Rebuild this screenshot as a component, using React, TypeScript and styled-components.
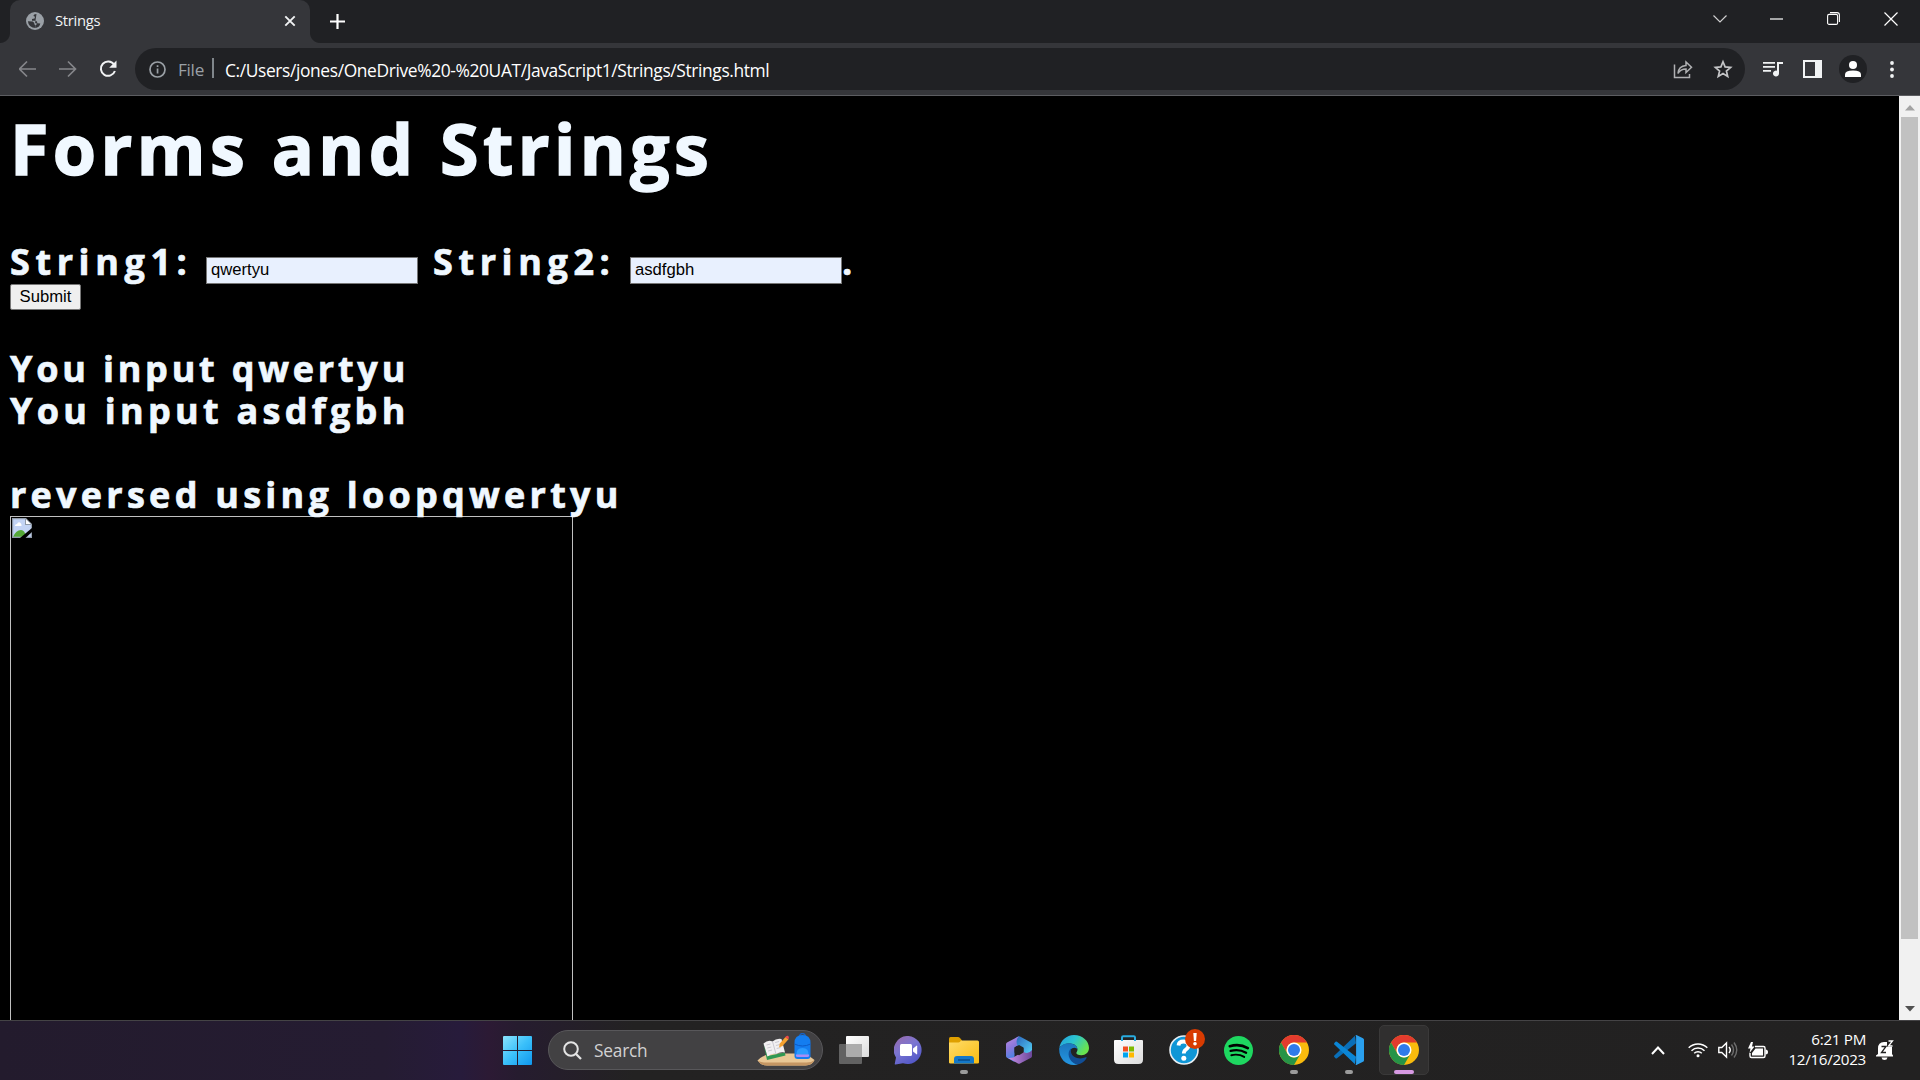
import React from 'react';
import styled, { createGlobalStyle } from 'styled-components';

const ui = '"Open Sans", "Noto Sans", sans-serif';

const Global = createGlobalStyle`
  * { box-sizing: border-box; }
  body { margin: 0; background: #000; overflow: hidden; }
`;
const Screen = styled.div`
  width: 1920px; height: 1080px; display: flex; flex-direction: column;
  background: #000; overflow: hidden; font-family: ${ui}; color: #fff;
  svg { display: block; flex: none; }
`;

/* ---------- browser chrome ---------- */
const TabStrip = styled.header`
  height: 43px; flex: none; display: flex; background: #202124;
`;
const Tab = styled.div`
  width: 300px; margin-left: 10px; height: 43px; position: relative;
  border-radius: 10px 10px 0 0; background: #35363a;
  display: flex; align-items: center; padding: 0 14px 2px 16px;
  &::before, &::after {
    content: ''; position: absolute; bottom: 0; width: 10px; height: 10px;
  }
  &::before { left: -10px; background: radial-gradient(circle at 0 0, #202124 9.5px, #35363a 10.5px); }
  &::after { right: -10px; background: radial-gradient(circle at 100% 0, #202124 9.5px, #35363a 10.5px); }
`;
const TabTitle = styled.span`
  flex: 1; margin: -1px 0 0 11px; font-size: 14.8px; letter-spacing: -0.3px; line-height: 20px; color: #f1f3f4;
`;
const NewTab = styled.div`
  margin: 14px 0 0 20px;
`;
const WindowButtons = styled.div`
  margin-left: auto; display: flex; align-items: center; height: 37px;
`;
const WindowButton = styled.div<{ $w: number }>`
  width: ${p => p.$w}px; display: flex; justify-content: center;
`;
const Toolbar = styled.div`
  height: 53px; flex: none; background: #35363a; border-bottom: 1px solid #5c5d61;
  display: flex; align-items: center; padding: 0 18px 0 18px;
`;
const NavButtons = styled.div`
  display: flex; gap: 22px; width: 117px; padding-left: 1px;
`;
const Omnibox = styled.div`
  width: 1610px; height: 42px; border-radius: 21px; background: #202124;
  display: flex; align-items: center; padding: 0 12px 0 14px;
`;
const Scheme = styled.span`
  margin: 1px 0 0 12px; font-size: 17.2px; color: #9aa0a6; letter-spacing: -0.3px; line-height: 24px; width: 34px;
`;
const Divider = styled.span`
  width: 2px; height: 20px; background: #80868b; margin-bottom: 2px;
`;
const Address = styled.span`
  margin: 1px 0 0 11px; flex: 1; font-size: 17.4px; letter-spacing: -0.38px; line-height: 24px; white-space: nowrap;
`;
const OmniActions = styled.div`
  display: flex; gap: 20px;
`;
const ToolbarActions = styled.div`
  display: flex; align-items: center; margin-left: 18px;
`;
const Avatar = styled.div`
  width: 28px; height: 28px; border-radius: 50%; background: #202124; margin: 0 23px 0 17px;
  display: flex; align-items: center; justify-content: center;
`;

/* ---------- document ---------- */
const Viewport = styled.main`
  flex: 1; min-height: 0; display: flex; background: #000;
`;
const Page = styled.div`
  flex: 1; min-width: 0; overflow: hidden; padding-left: 10px;
  color: aliceblue; font-family: "Open Sans", "Liberation Sans", sans-serif; font-weight: 700;
  -webkit-text-stroke: 0.7px aliceblue;
`;
const Title = styled.h1`
  margin: 10px 0 0; font-size: 70px; line-height: 84px; font-weight: 700; letter-spacing: 4.4px; height: 133px; white-space: nowrap;
  -webkit-text-stroke-width: 1.5px;
`;
const Line = styled.div<{ $ls?: number }>`
  height: 42px; line-height: 42px; font-size: 36px; letter-spacing: ${p => p.$ls ?? 4}px; white-space: nowrap;
`;
const FormLine = styled(Line)`
  display: flex; margin-top: 5px; height: 40px; line-height: 35px;
`;
const Label = styled.label<{ $w: number; $indent?: number }>`
  width: ${p => p.$w}px; padding-left: ${p => p.$indent ?? 0}px;
`;
const TextField = styled.input`
  width: 212px; height: 27px; margin: 13px 0 0; padding: 0 4px 2px; border: 1px solid #767676; border-radius: 0;
  background: #e8f0fe; color: #000; font: 16.67px "Liberation Sans", Arial, sans-serif; outline: none;
  -webkit-text-stroke: 0;
`;
const Submit = styled.button`
  display: block; width: 71px; height: 26px; padding: 0 0 1px; border: 1px solid #767676; border-radius: 2px;
  background: #efefef; color: #000; font: 16.67px "Liberation Sans", Arial, sans-serif; margin-bottom: 38px;
  -webkit-text-stroke: 0;
`;
const MissingImage = styled.div`
  width: 563px; height: 563px; border: 1px solid #c0c0c0; padding: 1px;
`;
const Scrollbar = styled.aside`
  width: 21px; background: #f1f1f1; display: flex; flex-direction: column; align-items: center;
`;
const ScrollArrow = styled.div`
  height: 21px; display: flex; align-items: center; padding-top: 2px;
`;
const ScrollArrowEnd = styled(ScrollArrow)`
  padding: 0 0 2px;
`;
const Thumb = styled.div`
  width: 17px; height: 822px; background: #c1c1c1; margin-bottom: auto;
`;

/* ---------- taskbar ---------- */
const Taskbar = styled.footer`
  height: 60px; flex: none; border-top: 1px solid #444345; display: flex; align-items: center; padding-bottom: 1px;
  background: linear-gradient(90deg, #231b2d 0, #251c32 20%, #271b3b 24%, #2c1a34 25.5%, #261c2f 27%, #232222 33%, #222121 100%);
`;
const StartButton = styled.div`
  margin-left: 503px; width: 45px;
`;
const SearchBox = styled.div`
  width: 275px; height: 40px; border-radius: 20px; background: #424143; border: 1px solid #58575a;
  display: flex; align-items: center; padding: 0 7px 0 14px; margin-right: 3px;
`;
const SearchText = styled.span`
  flex: 1; margin-left: 12px; font-size: 17.3px; color: #d2d1d2; letter-spacing: -0.2px;
`;
const AppSlot = styled.div<{ $active?: boolean }>`
  width: 50px; height: 50px; margin: 0 2.5px; border-radius: 5px; position: relative;
  display: flex; align-items: center; justify-content: center;
  background: ${p => (p.$active ? '#302f2f' : 'transparent')};
  border: 1px solid ${p => (p.$active ? '#3a3939' : 'transparent')};
`;
const Indicator = styled.i<{ $active?: boolean }>`
  position: absolute; bottom: 0; left: 50%; transform: translateX(-50%);
  width: ${p => (p.$active ? 20 : 8)}px; height: 4px; border-radius: 2px;
  background: ${p => (p.$active ? '#d79ae3' : '#9b9b9b')};
`;
const Tray = styled.div`
  margin-left: auto; display: flex; align-items: center; padding-right: 26px;
`;
const TrayIcon = styled.div<{ $gap: number }>`
  margin-left: ${p => p.$gap}px;
`;
const Clock = styled.div`
  width: 98px; text-align: right; font-size: 15.2px; line-height: 20px; letter-spacing: -0.3px; margin: 0 10px 2px 0;
`;

function ChromeLogo() {
  return (
    <svg width="30" height="30" viewBox="0 0 48 48">
      <circle cx="24" cy="24" r="24" fill="#f9bb0d" />
      <path d="M3.2 12A24 24 0 0 1 44.8 12H24A12 12 0 0 0 13.6 30Z" fill="#e33b2e" />
      <path d="M3.2 12A24 24 0 0 0 24 48L34.4 30A12 12 0 0 1 13.6 30Z" fill="#269447" />
      <circle cx="24" cy="24" r="12" fill="#fff" />
      <circle cx="24" cy="24" r="9.6" fill="#2f7bea" />
    </svg>
  );
}

function TaskView() {
  return (
    <svg width="30" height="28" viewBox="0 0 30 28">
      <defs><linearGradient id="tv" x2="1" y2="1"><stop stopColor="#fff" /><stop offset="1" stopColor="#dcdcdc" /></linearGradient></defs>
      <rect x="7" width="23" height="21" rx="1" fill="url(#tv)" />
      <rect y="8" width="23" height="20" rx="1" fill="#626262" />
      <path d="M7 8h16v13H8q-1 0-1-1z" fill="#acacac" />
    </svg>
  );
}

function ChatLogo() {
  return (
    <svg width="29" height="29" viewBox="0 0 29 29">
      <defs><linearGradient id="ch" x1="0" y1="0" x2=".6" y2="1"><stop stopColor="#9b6aa8" /><stop offset=".5" stopColor="#7b75d2" /><stop offset="1" stopColor="#5358c8" /></linearGradient></defs>
      <path d="M14.500 0A14 14 0 1 1 9 27.200L1.500 28.500Q.5 28.500 .8 27.500L2 21.500A14 14 0 0 1 14.500 0z" fill="url(#ch)" />
      <rect x="6" y="8" width="12" height="12" rx="1.500" fill="#fff" />
      <path d="M19 12.500l3.500-2.800q.7-.3.7.5v7.600q0 .8-.7.500L19 15.500z" fill="#fff" />
    </svg>
  );
}

function FolderLogo() {
  return (
    <svg width="30" height="27" viewBox="0 0 30 27">
      <defs><linearGradient id="fo" x2="1" y2="1"><stop stopColor="#ffdc69" /><stop offset="1" stopColor="#f9bc12" /></linearGradient></defs>
      <path d="M0 1.500Q0 0 1.500 0H9q1 0 2 1l2 2.500V8H0z" fill="#dfa000" />
      <path d="M0 5.500h9.500Q11 5.500 12 3.500H28.500Q30 3.500 30 5v20.500q0 1-1.500 1H1.500q-1.500 0-1.500-1z" fill="url(#fo)" />
      <path d="M5 26.500V22q0-3 3-3h14q3 0 3 3v4.500z" fill="#1478c8" />
      <path d="M9 23h12" stroke="#074d8b" strokeWidth="1.500" />
    </svg>
  );
}

function OfficeLogo() {
  return (
    <svg width="26" height="28" viewBox="0 0 26 28">
      <defs>
        <linearGradient id="o1" x2=".3" y2="1"><stop stopColor="#c08be2" /><stop offset=".5" stopColor="#8a78dc" /><stop offset="1" stopColor="#3b86e6" /></linearGradient>
        <linearGradient id="o2" x2="1" y2="1"><stop stopColor="#2a62ba" /><stop offset="1" stopColor="#55d6f8" /></linearGradient>
        <linearGradient id="o3" x2="1"><stop stopColor="#cc92ea" /><stop offset="1" stopColor="#6a4798" /></linearGradient>
      </defs>
      <path d="M12 .4Q13 0 14 .4L25 6.500q1 .6 1 2V19L17.500 17V12L9.500 9V2z" fill="url(#o2)" />
      <path d="M13 .2L1 6.500Q0 7 0 8.500V20q0 1.200 1 1.800l7.500 4.200V11.500l3-2Q9 4 13 .2z" fill="url(#o1)" />
      <path d="M26 14v6q0 1.200-1 1.800L14 27.600q-1 .4-2 0L2 22q5 .5 8.500-2.500l7-3.700Q22 19 26 14z" fill="url(#o3)" />
      <path d="M13 9l4.500 2.600v5L13 19.200 8.500 16.600v-5z" fill="#242323" />
    </svg>
  );
}

function EdgeLogo() {
  return (
    <svg width="30" height="30" viewBox="0 0 30 30">
      <defs>
        <linearGradient id="e1" x1="0" x2="1" y2=".5"><stop stopColor="#249be0" /><stop offset=".5" stopColor="#2bc5cf" /><stop offset="1" stopColor="#69e34f" /></linearGradient>
        <linearGradient id="e2" x2="0" y2="1"><stop stopColor="#1b76bd" /><stop offset="1" stopColor="#2496e2" /></linearGradient>
      </defs>
      <path d="M.3 13C1.500 5.500 7.500 0 15 0c8.500 0 15 6 15 13 0 4.500-3.500 7.200-7.500 7.200-3.500 0-5.200-1.200-5.200-2.200 0-.8 1.200-1.300 1.200-3.500 0-3-3-6-7.500-6C6 8.500 2 10.500.3 13z" fill="url(#e1)" />
      <path d="M.2 13C2.500 9.500 6.500 8 10.500 8.300c5 .2 8 3.200 8 6.200-.8-2-5-3-7 .5-3 5 .5 13 7.500 14.500C9 32-.5 25 .2 13z" fill="url(#e2)" />
      <path d="M12.500 13c-5.500 4-3 14 5.500 16.500 4.500-.5 8-3.500 9.600-6.500.3-.7-.3-1-.8-.7-6 2.600-13.500.7-14.800-5-.3-1.800 0-3 .5-4.300z" fill="#114e96" />
    </svg>
  );
}

function StoreLogo() {
  return (
    <svg width="29" height="30" viewBox="0 0 29 30">
      <defs><linearGradient id="st" y2="1"><stop stopColor="#fff" /><stop offset="1" stopColor="#dcdcdc" /></linearGradient></defs>
      <path d="M0 6q0-1 1-1h27q1 0 1 1v18.500q0 4.500-4.500 4.500h-20Q0 29 0 24.500z" fill="url(#st)" />
      <path d="M8 6V2.500Q8 1.200 9.300 1.200h10.400Q21 1.200 21 2.500V6" fill="none" stroke="#29acdf" strokeWidth="2" />
      <path d="M9 11.500h5v5H9z" fill="#f25022" /><path d="M15 11.500h5v5h-5z" fill="#7fba00" />
      <path d="M9 17.500h5v5H9z" fill="#00a4ef" /><path d="M15 17.500h5v5h-5z" fill="#ffb900" />
    </svg>
  );
}

function HelpLogo() {
  return (
    <svg width="42" height="42" viewBox="0 0 42 42">
      <circle cx="21" cy="21" r="14" fill="#0f96d6" stroke="#e8eef2" strokeWidth="1.600" />
      <path d="M15.500 16.500Q15.800 12.500 20.500 12.500q5 0 5 4 0 2.300-2.500 4-2.200 1.500-2.200 4" fill="none" stroke="#fff" strokeWidth="3.800" />
      <circle cx="20.800" cy="29.300" r="2.500" fill="#fff" />
      <circle cx="32" cy="10" r="10" fill="#d83b01" />
      <path d="M30.300 4h3.400l-.6 8h-2.200z" fill="#fff" /><circle cx="32" cy="14.800" r="1.800" fill="#fff" />
    </svg>
  );
}

function SpotifyLogo() {
  return (
    <svg width="29" height="29" viewBox="0 0 29 29">
      <circle cx="14.500" cy="14.500" r="14.500" fill="#1ed760" />
      <g fill="none" stroke="#000" strokeLinecap="round">
        <path d="M5.800 10.200c6-1.700 13-1 18 1.900" strokeWidth="2.700" />
        <path d="M6.600 14.900c5-1.400 11-.8 15.500 1.800" strokeWidth="2.300" />
        <path d="M7.300 19.200c4.500-1 9-.6 12.900 1.700" strokeWidth="1.900" />
      </g>
    </svg>
  );
}

function CodeLogo() {
  return (
    <svg width="30" height="30" viewBox="0 0 30 30">
      <path d="M22 8.200L3 23.200q-.8.500-1.500 0L.4 22q-.7-.8 0-1.500L21 .8z" fill="#0a6fb8" />
      <path d="M22 21.800L3 6.800q-.8-.5-1.500 0L.4 8q-.7.800 0 1.500L21 29.200z" fill="#0b86d6" />
      <path d="M21.500.3q.6-.4 1.400 0L29 3.200q1 .5 1 1.600v20.400q0 1.100-1 1.600l-6.100 2.900q-.8.400-1.400 0 .6-.5.600-1.500V1.800q0-1-.6-1.500z" fill="#2aa0ee" />
    </svg>
  );
}

function SearchArt() {
  return (
    <svg width="58" height="34" viewBox="0 0 58 34">
      <path d="M.5 27.500Q6 22 14 20.500L50 20.500q3 3.500 7.500 6.500-2 5-9 5.500H10Q4 32.500.5 27.500z" fill="#e9c795" />
      <path d="M.5 27.500q3 2 9 2h40q5 0 8-2.500-2 5-9 5.500H10Q4 32.500.5 27.500z" fill="#c59663" />
      <path d="M6.500 11l3.500 16 18.500-4.500-.7-3-17.300 3.500z" fill="#2f9852" />
      <path d="M6.500 10.500q4.500-4 9-2 4-3.500 9-2.500l3.500 13.500q-5-1-9 1.500-4.500-1-8.500 2.500z" fill="#f2f0f2" />
      <path d="M15.500 8.500l3.500 12.500M9.500 12l4-1m-3.200 4l4-1m-3.200 4l4-1m3-7.500l4-1m-3.200 4l4-1m-3.200 4l4-1" stroke="#b9b6c2" strokeWidth=".7" fill="none" />
      <path d="M22 14.500l.8-4L28.500 4l3 2.300L25.500 13z" fill="#f5a12f" /><path d="M28 4.500q1.200-2 2.700-1.700 1.800.7.800 3.500z" fill="#ec4b4b" />
      <path d="M42.500 3.500q.5-3 3-3t3 3" stroke="#1861c2" strokeWidth="1.500" fill="none" />
      <path d="M37.500 10q0-8 8-8t8 8v13q0 3-3 3h-10q-3 0-3-3z" fill="#147df0" />
      <path d="M37.500 11q8 4 16 0" stroke="#0d59c5" fill="none" />
      <path d="M39.500 22q-.5-7 6-7t6 7z" fill="#2b9bff" />
      <path d="M39 21.500h13q.5 2.500-1.500 2.500h-10q-2 0-1.500-2.500z" fill="#a98df5" />
    </svg>
  );
}

export default function App() {
  return (
    <Screen>
      <Global />
      <TabStrip>
        <Tab>
          <svg width="18" height="18" viewBox="0 0 18 18">
            <circle cx="9" cy="9" r="9" fill="#9aa0a6" />
            <path d="M10.500 1.900Q7.500 2 7.500 4l1.500.8-.5 1.700-2.500.5v1.800h4q1.500.5 1.300 2.500l3 .2q-.5 3.500-4.500 4.500v-2.700l1.300-1.500-2-.8z" fill="#35363a" />
            <path d="M1.900 9.200l4.800.3q2 1 1.800 3l1.200 1V16Q2.500 15.700 1.900 9.200z" fill="#35363a" />
          </svg>
          <TabTitle>Strings</TabTitle>
          <svg width="12" height="12" viewBox="0 0 12 12" stroke="#f1f3f4" strokeWidth="1.900"><path d="M1.300 1.300l9.400 9.400M10.700 1.300l-9.400 9.400" /></svg>
        </Tab>
        <NewTab><svg width="15" height="15" viewBox="0 0 15 15" stroke="#fff" strokeWidth="2.200"><path d="M7.500 0v15M0 7.500h15" /></svg></NewTab>
        <WindowButtons>
          <WindowButton $w={57}><svg width="14" height="8" viewBox="0 0 14 8" stroke="#cfcfd0" fill="none" strokeWidth="1.200"><path d="M.5.5L7 7 13.500.5" /></svg></WindowButton>
          <WindowButton $w={57}><svg width="13" height="2" viewBox="0 0 13 2" stroke="#fff"><path d="M0 1h13" strokeWidth="1.200" /></svg></WindowButton>
          <WindowButton $w={57}><svg width="13" height="13" viewBox="0 0 13 13" stroke="#fff" fill="none" strokeWidth="1.100"><rect x=".6" y="2.400" width="10" height="10" rx="1.500" /><path d="M3 .6h7q2.400 0 2.400 2.400v7" /></svg></WindowButton>
          <WindowButton $w={58}><svg width="14" height="14" viewBox="0 0 14 14" stroke="#fff" strokeWidth="1.200"><path d="M.5.5l13 13M13.500.5l-13 13" /></svg></WindowButton>
        </WindowButtons>
      </TabStrip>
      <Toolbar>
        <NavButtons>
          <svg width="18" height="18" viewBox="0 0 18 18" stroke="#85868a" fill="none" strokeWidth="1.700"><path d="M17 9H1M8 1.500L.500 9 8 16.500" /></svg>
          <svg width="18" height="18" viewBox="0 0 18 18" stroke="#85868a" fill="none" strokeWidth="1.700"><path d="M0 9h16M9 1.500L16.500 9 9 16.500" /></svg>
          <svg width="18" height="18" viewBox="0 0 18 18"><path d="M15 4.500A7.200 7.200 0 1 0 15.900 11" fill="none" stroke="#f1f3f4" strokeWidth="2" /><path d="M17.500.5v7.300h-7.300z" fill="#f1f3f4" /></svg>
        </NavButtons>
        <Omnibox>
          <svg width="17" height="17" viewBox="0 0 17 17"><circle cx="8.500" cy="8.500" r="7.500" fill="none" stroke="#9aa0a6" strokeWidth="1.700" /><path d="M7.700 7.500h1.700v5H7.700zM7.700 4.300h1.700V6H7.700z" fill="#9aa0a6" /></svg>
          <Scheme>File</Scheme>
          <Divider />
          <Address>C:/Users/jones/OneDrive%20-%20UAT/JavaScript1/Strings/Strings.html</Address>
          <OmniActions>
            <svg width="20" height="20" viewBox="0 0 20 20" fill="none" stroke="#b0b1b3" strokeWidth="1.500"><path d="M1.500 5.500v13h15v-3.500M5 14.500q.5-7.500 8-8V3l5.500 5.200L13 13.500V10q-5.500 0-8 4.500z" /></svg>
            <svg width="20" height="20" viewBox="0 0 20 20" fill="none" stroke="#c4c5c7" strokeWidth="1.700"><path d="M10 2.800l2.100 5.100 5.500.5-4.200 3.600 1.300 5.400-4.700-2.900-4.700 2.900L6.600 12 2.400 8.400l5.500-.5z" /></svg>
          </OmniActions>
        </Omnibox>
        <ToolbarActions>
          <svg width="20" height="17" viewBox="0 0 20 17" fill="#f1f3f4"><path d="M0 1h12v1.800H0zM0 5h12v1.800H0zM0 9h8v1.800H0zM14 1h6v2h-4v9.500a3 3 0 1 1-2-2.800z" /></svg>
          <TrayIcon $gap={20}><svg width="19" height="18" viewBox="0 0 19 18"><path d="M0 0h19v18H0z" fill="#f1f3f4" /><path d="M2 2h10v14H2z" fill="#35363a" /></svg></TrayIcon>
          <Avatar><svg width="16" height="16" viewBox="0 0 16 16" fill="#fff"><circle cx="8" cy="4" r="4" /><path d="M0 16v-2.500Q0 9.500 8 9.500t8 4V16z" /></svg></Avatar>
          <svg width="4" height="17" viewBox="0 0 4 17" fill="#f1f3f4"><circle cx="2" cy="2" r="1.900" /><circle cx="2" cy="8.500" r="1.900" /><circle cx="2" cy="15" r="1.900" /></svg>
        </ToolbarActions>
      </Toolbar>
      <Viewport>
        <Page>
          <Title>Forms and Strings</Title>
          <FormLine $ls={5.6}>
            <Label $w={196}>String1:</Label>
            <TextField defaultValue="qwertyu" />
            <Label $w={212} $indent={15}>String2:</Label>
            <TextField defaultValue="asdfgbh" />
            <span>.</span>
          </FormLine>
          <Submit>Submit</Submit>
          <Line $ls={3.78}>You input qwertyu</Line>
          <Line $ls={4.27}>You input asdfgbh</Line>
          <Line />
          <Line $ls={4.25}>reversed using loopqwertyu</Line>
          <MissingImage>
            <svg width="20" height="20" viewBox="0 0 20 20">
              <path d="M0 0h14l6 6v14H0z" fill="#8f9aa8" /><path d="M1.200 1.200H13V7h5.800v11.800H1.200z" fill="#c3d4f5" />
              <path d="M3 8q0-2 2-2 1-2.500 3-1.500T9.500 8z" fill="#fff" />
              <path d="M1.200 18.800Q4 12 9 12q4 0 5 6.800z" fill="#55a838" />
              <path d="M14 1.200L18.800 6H14z" fill="#fff" />
              <path d="M20 10v4l-6.500 6H8z" fill="#000" />
            </svg>
          </MissingImage>
        </Page>
        <Scrollbar>
          <ScrollArrow><svg width="10" height="6" viewBox="0 0 10 6"><path d="M5 0l5 5.500H0z" fill="#a3a3a3" /></svg></ScrollArrow>
          <Thumb />
          <ScrollArrowEnd><svg width="10" height="6" viewBox="0 0 10 6"><path d="M0 0h10L5 5.500z" fill="#505050" /></svg></ScrollArrowEnd>
        </Scrollbar>
      </Viewport>
      <Taskbar>
        <StartButton>
          <svg width="29" height="29" viewBox="0 0 29 29">
            <defs><linearGradient id="win" gradientUnits="userSpaceOnUse" x1="0" y1="0" x2="29" y2="29"><stop stopColor="#8be3fd" /><stop offset=".5" stopColor="#3bc0fa" /><stop offset="1" stopColor="#0f97ee" /></linearGradient></defs>
            <path d="M1 0h13v14H0V1q0-1 1-1zM15 0h13q1 0 1 1v13H15zM0 15h14v14H1q-1 0-1-1zM15 15h14v13q0 1-1 1H15z" fill="url(#win)" />
          </svg>
        </StartButton>
        <SearchBox>
          <svg width="19" height="19" viewBox="0 0 19 19" fill="none" stroke="#e4e4e4" strokeWidth="2"><circle cx="8" cy="8" r="6.800" /><path d="M12.800 12.800l5.200 5.200" strokeWidth="2.300" /></svg>
          <SearchText>Search</SearchText>
          <SearchArt />
        </SearchBox>
        <AppSlot><TaskView /></AppSlot>
        <AppSlot><ChatLogo /></AppSlot>
        <AppSlot><FolderLogo /><Indicator /></AppSlot>
        <AppSlot><OfficeLogo /></AppSlot>
        <AppSlot><EdgeLogo /></AppSlot>
        <AppSlot><StoreLogo /></AppSlot>
        <AppSlot><HelpLogo /></AppSlot>
        <AppSlot><SpotifyLogo /></AppSlot>
        <AppSlot><ChromeLogo /><Indicator /></AppSlot>
        <AppSlot><CodeLogo /><Indicator /></AppSlot>
        <AppSlot $active><ChromeLogo /><Indicator $active /></AppSlot>
        <Tray>
          <svg width="14" height="9" viewBox="0 0 14 9" fill="none" stroke="#fff" strokeWidth="2"><path d="M1 8l6-6.500L13 8" /></svg>
          <TrayIcon $gap={23}><svg width="20" height="16" viewBox="0 0 20 16" fill="none" stroke="#fff" strokeWidth="1.500"><path d="M.7 5.800a13.200 13.200 0 0 1 18.600 0M3.500 8.700a9.200 9.200 0 0 1 13 0M6.200 11.300a5.400 5.400 0 0 1 7.600 0" /><circle cx="10" cy="13.700" r="1.500" fill="#fff" stroke="none" /></svg></TrayIcon>
          <TrayIcon $gap={10}><svg width="20" height="18" viewBox="0 0 20 18" fill="none" stroke="#fff" strokeWidth="1.400"><path d="M.8 6.500h3L8.500 2v14l-4.700-4.500h-3zM11 6q2.500 3 0 6" /><path d="M13.500 3.500q4 5.500 0 11M16 1.500q5.500 7.500 0 15" stroke="#6d6d6d" /></svg></TrayIcon>
          <TrayIcon $gap={10}><svg width="20" height="17" viewBox="0 0 20 17"><path d="M7 4.500h8.500Q17 4.500 17 6v8q0 1.500-1.500 1.500h-12Q2 15.500 2 14v-3" fill="none" stroke="#fff" strokeWidth="1.400" /><path d="M7.500 6.500H15v7H4V11zM17.500 7.500q2.500 0 2.500 2.500t-2.500 2.500zM3 0L0 6.500h2.500L1.500 11 6.500 4.500H4L5 0z" fill="#fff" /></svg></TrayIcon>
          <Clock>6:21 PM<br />12/16/2023</Clock>
          <svg width="18" height="20" viewBox="0 0 18 20"><path d="M2 14V8.500Q2 2 8 2h3v5h5v7l1 1.500v1H0v-1zM5.500 17.500h6Q11 20 8.500 20t-3-2.500z" fill="#fff" /><path d="M5.500 6.500h4.500l-4.500 6H10" fill="none" stroke="#222" strokeWidth="1.300" /><path d="M12.500 1h4l-4 5h4" fill="none" stroke="#fff" strokeWidth="1.300" /></svg>
        </Tray>
      </Taskbar>
    </Screen>
  );
}
